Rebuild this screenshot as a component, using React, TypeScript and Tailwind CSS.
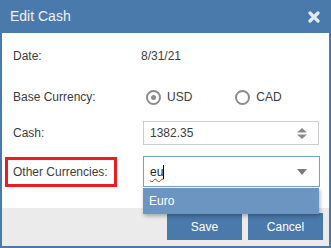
const Radio = ({ checked }: { checked?: boolean }) => (
  <span className="w-[15px] h-[15px] rounded-full border-2 border-[#8c8c8c] flex items-center justify-center">
    {checked && <span className="w-[5px] h-[5px] rounded-full bg-[#8c8c8c]" />}
  </span>
);

export default function App() {
  return (
    <div className="w-[331px] h-[248px] flex flex-col bg-white font-['Liberation_Sans',Arial,sans-serif] text-[12px] text-[#3c3c3c] overflow-hidden">
      <div className="h-[33px] shrink-0 bg-[#4a79ab] flex items-center justify-between pl-[10px] pr-[11px]">
        <span className="text-[14px] text-[#eef2f7]">Edit Cash</span>
        <svg width="12" height="12" viewBox="0 0 12 12">
          <path d="M2 2 L10 10 M10 2 L2 10" stroke="#e3eaf2" strokeWidth="3.2" strokeLinecap="round" />
        </svg>
      </div>

      <div className="flex-1 relative border-x-2 border-[#4a79ab] pt-[3px] pl-[3px]">
        <div className="h-[40px] flex items-center">
          <span className="w-[136px] pl-[8px]">Date:</span>
          <span>8/31/21</span>
        </div>
        <div className="h-[42px] flex items-center">
          <span className="w-[141px] pl-[8px]">Base Currency:</span>
          <Radio checked />
          <span className="ml-[6px]">USD</span>
          <span className="ml-[43px]"><Radio /></span>
          <span className="ml-[6px]">CAD</span>
        </div>
        <div className="h-[30px] flex items-center">
          <span className="w-[138px] pl-[8px]">Cash:</span>
          <div className="w-[176px] h-[24px] border border-[#cccccc] flex items-center justify-between pl-[6px] pr-[11px]">
            <span>1382.35</span>
            <svg width="10" height="11" viewBox="0 0 10 11">
              <path d="M0 4.5 L5 0 L10 4.5 Z M0 6.5 L5 11 L10 6.5 Z" fill="#8a8a8a" />
            </svg>
          </div>
        </div>
        <div className="mt-[8px] h-[31px] flex items-center">
          <span className="w-[112px] h-[30px] border-[3px] border-[#ec1c24] pl-[5px] flex items-center">
            Other Currencies:
          </span>
          <div className="ml-[26px] w-[177px] h-[31px] border border-[#7b9dc6] flex items-center justify-between pl-[6px] pr-[12px] text-[#222]">
            <span className="flex items-center">
              <span className="underline decoration-wavy decoration-[#e02020] decoration-1 underline-offset-2">eu</span>
              <span className="w-px h-[14px] bg-black" />
            </span>
            <svg width="10" height="6" viewBox="0 0 10 6">
              <path d="M0 0 L10 0 L5 6 Z" fill="#7a7a7a" />
            </svg>
          </div>
        </div>
        <div className="absolute left-[141px] top-[155px] w-[176px] h-[26px] bg-[#6c95c2] text-white flex items-center pl-[6px] shadow-[1px_2px_4px_rgba(0,0,0,0.3)] z-10">
          Euro
        </div>
      </div>

      <div className="h-[40px] shrink-0 bg-[#ebebeb] border-x-2 border-b-2 border-[#4a79ab] flex justify-end gap-[6px] pt-[5px] pr-[6px]">
        <button className="w-[75px] h-[27px] bg-[#4a79ab] text-white text-[12px]">Save</button>
        <button className="w-[75px] h-[27px] bg-[#4a79ab] text-white text-[12px]">Cancel</button>
      </div>
    </div>
  );
}
